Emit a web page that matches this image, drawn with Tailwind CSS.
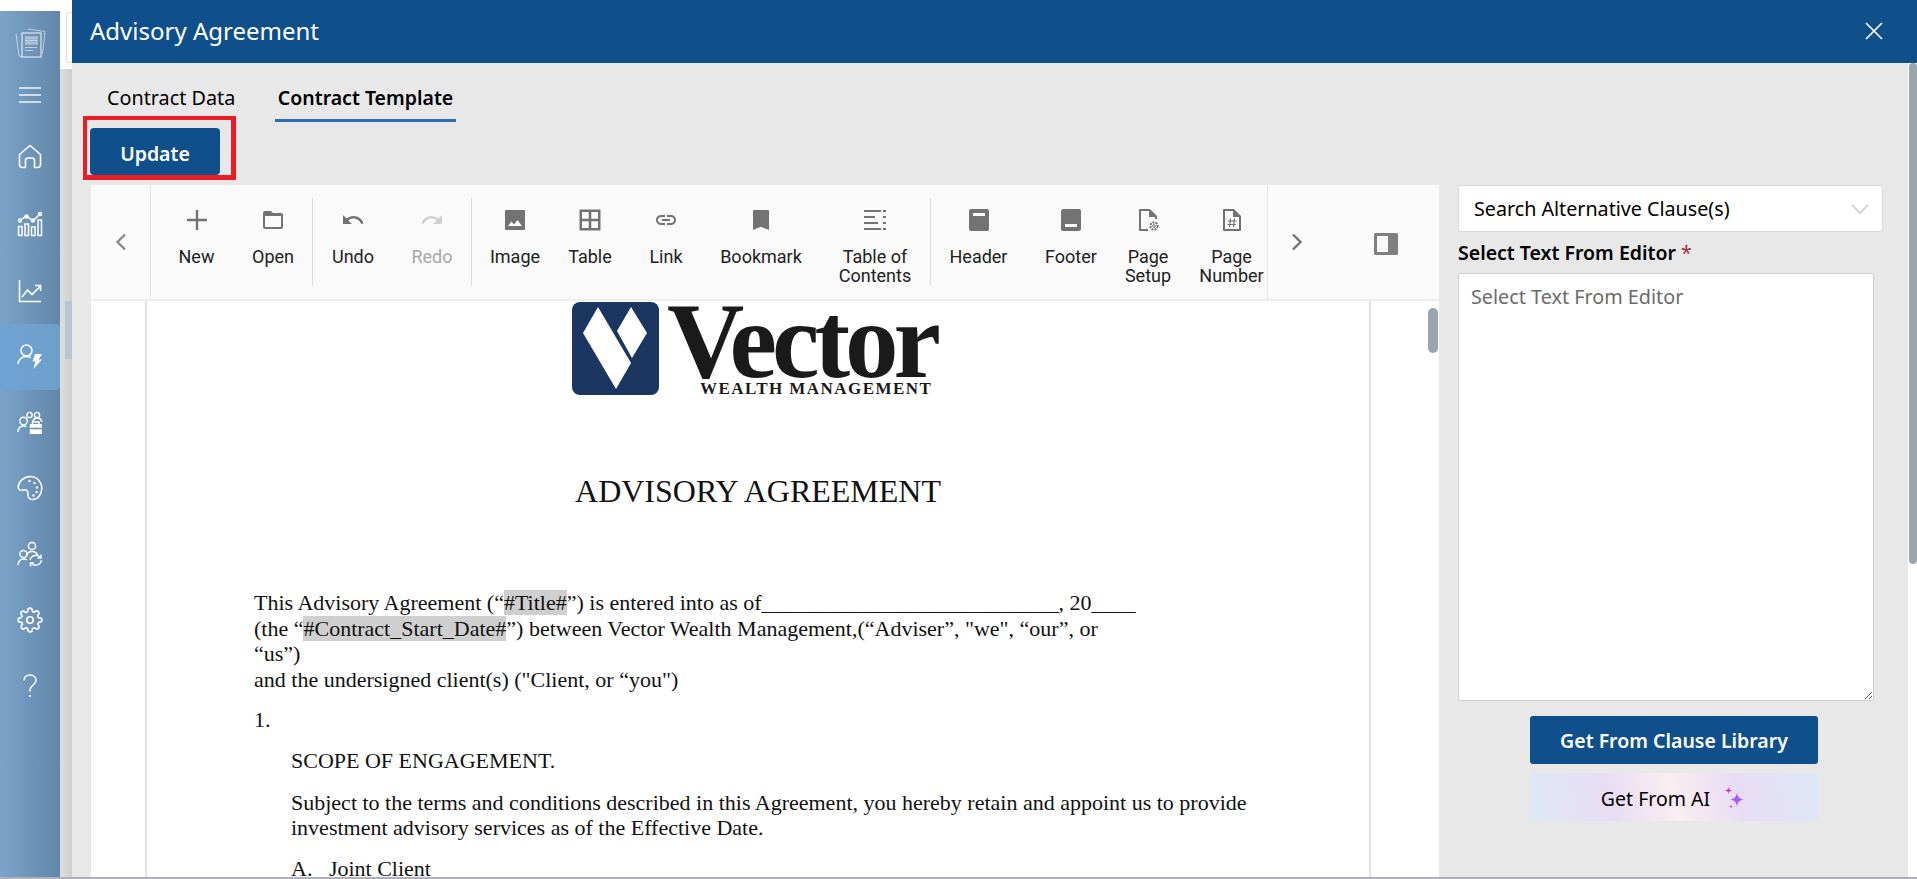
<!DOCTYPE html>
<html lang="en">
<head>
<meta charset="utf-8">
<title>Advisory Agreement</title>
<script src="https://cdn.jsdelivr.net/npm/@tailwindcss/browser@4"></script>
</head>
<body class="w-[1917px] h-[879px] overflow-hidden bg-white font-['Noto_Sans','Open_Sans',sans-serif] text-black">
<div class="flex h-[877px]">
  <!-- app sidebar -->
  <aside class="w-[60px] mt-[11px] flex flex-col items-center text-white bg-[linear-gradient(90deg,#7ba3c9,#6186a9)]">
    <div class="h-[64px] flex items-center justify-center">
      <svg width="32" height="32" viewBox="0 0 32 32" fill="none" stroke="#fff" stroke-opacity=".55" stroke-width="1"><path d="M2 6.500 L5 29 L9 30"/><path d="M14 2 L31 4.500 L28.500 27"/><rect x="8" y="6" width="19" height="24" stroke-opacity=".7" stroke-width="1.300"/><path d="M11 9h13v9H11z" fill="#fff" fill-opacity=".3" stroke="none"/><path d="M11 11h13M11 13.500h13M11 16h13" stroke-opacity=".4"/><path d="M11 20.500h12M11 23.500h8" stroke-width="1.200"/></svg>
    </div>
    <div class="h-[40px] flex items-center justify-center">
      <svg width="24" height="24" viewBox="0 0 24 24" fill="none" stroke="#fff" stroke-opacity=".9" stroke-width="1.400"><path d="M1 5h22M1 12h22M1 19h22"/></svg>
    </div>
    <div class="h-[69px] mt-[7px] flex items-center justify-center">
      <svg width="24" height="25" viewBox="0 0 24 25" fill="none" stroke="#fff" stroke-width="1.600" stroke-linejoin="round"><path d="M1.500 10.500 L12 1.500 L22.500 10.500 V20.500 a3 3 0 0 1-3 3 H16.500 V16.500 a2.500 2.500 0 0 0-2.500-2.500 h-4 a2.500 2.500 0 0 0-2.500 2.500 V23.500 H4.500 a3 3 0 0 1-3-3z"/></svg>
    </div>
    <div class="h-[66px] flex items-center justify-center">
      <svg width="26" height="26" viewBox="0 0 26 26" fill="none" stroke="#fff" stroke-width="1.500"><path d="M1.500 15.500h3.500v9H1.500zM8 13h3.500v11.500H8zM14.500 16h3.500v8.500h-3.500zM21 9h3.500v15.500H21z"/><path d="M3 9.500 9.500 5l6.500 5 7-7"/><circle cx="3" cy="9.500" r="1.500"/><circle cx="9.500" cy="5.500" r="1.500"/><circle cx="16" cy="9.500" r="1.500"/><circle cx="23" cy="3" r="1.500"/></svg>
    </div>
    <div class="h-[67px] flex items-center justify-center">
      <svg width="24" height="24" viewBox="0 0 24 24" fill="none" stroke="#fff" stroke-width="1.600"><path d="M1.500 1v21.500H23"/><path d="M4 18 9.500 11l4.500 4.500L22.500 7M17 6.500h5.500V12"/></svg>
    </div>
    <div class="h-[66px] w-full rounded-[4px] bg-[linear-gradient(90deg,#6fa3d5,#6f9ec9)] flex items-center justify-center">
      <svg width="26" height="26" viewBox="0 0 26 26" fill="none" stroke="#fff" stroke-width="1.500"><circle cx="9.500" cy="6.500" r="5.500"/><path d="M1 20C1.500 15.500 5 12.500 9.500 12.500c1.700 0 3 .3 4.200 .9"/><path d="M18 10h7l-3.500 5.500H25l-8.500 9.500 2-7.500h-3z" fill="#fff" stroke="none"/></svg>
    </div>
    <div class="h-[65px] flex items-center justify-center">
      <svg width="26" height="24" viewBox="0 0 26 24" fill="none" stroke="#fff" stroke-width="1.400"><circle cx="6.500" cy="10" r="3.800"/><path d="M.8 21c.4-3.500 2.600-6 5.700-6 1 0 2 .2 2.800.7"/><circle cx="12.500" cy="4" r="2.600"/><circle cx="20" cy="4" r="2.600"/><path d="M15.500 11c1-3 3-4 5-4s3.500 1 4.500 4"/><rect x="12.800" y="13" width="12" height="10" fill="#fff" stroke="none"/><path d="M15.500 13v-2h6.500v2" /><path d="M12.800 17.500h12M18.800 16.500v2" stroke="#6c92b5"/></svg>
    </div>
    <div class="h-[66px] flex items-center justify-center">
      <svg width="26" height="26" viewBox="0 0 26 26" fill="none" stroke="#fff" stroke-width="1.500"><path d="M13.500 1.500C7 1.500 1.500 6.500 1.200 12c-.2 3 2.300 3.700 5 3 2.700-.6 5 .2 4.700 3.500-.2 2.800 .6 6 4.600 6 5.500 0 9.300-5.500 9.300-11.500s-5-11.500-11.300-11.500z"/><circle cx="12.500" cy="6" r="1.200" fill="#fff" stroke="none"/><circle cx="17.500" cy="8" r="1.200" fill="#fff" stroke="none"/><circle cx="20" cy="12.500" r="1.200" fill="#fff" stroke="none"/><circle cx="19.500" cy="17" r="1.200" fill="#fff" stroke="none"/><circle cx="16.500" cy="20.500" r="1.200" fill="#fff" stroke="none"/></svg>
    </div>
    <div class="h-[66px] flex items-center justify-center">
      <svg width="26" height="26" viewBox="0 0 26 26" fill="none" stroke="#fff" stroke-width="1.500"><circle cx="15" cy="5" r="3.600"/><path d="M9.500 15c.6-3 2.700-4.500 5.500-4.500s5 1.500 5.500 4"/><circle cx="6.500" cy="13" r="3.600"/><path d="M1 24c.4-3.500 2.500-6 5.500-6 1.300 0 2.300 .3 3.300 1"/><path d="M13 19a6 6 0 0 1 10.500-2.500M24.500 19a6 6 0 0 1-10.500 3"/><path d="M24 13.500v3.500h-3.500M13.500 25.500v-3.500h3.500" stroke-width="1.400"/></svg>
    </div>
    <div class="h-[66px] flex items-center justify-center">
      <svg width="26" height="26" viewBox="0 0 24 24" fill="none" stroke="#fff" stroke-width="1.500" stroke-linejoin="round"><circle cx="12" cy="12" r="3"/><path d="M19.400 15a1.650 1.650 0 0 0 .33 1.820l.06.06a2 2 0 1 1-2.830 2.830l-.06-.06a1.650 1.650 0 0 0-2.800 1.170V21a2 2 0 1 1-4 0v-.09A1.650 1.650 0 0 0 7.300 19.730l-.06.06a2 2 0 1 1-2.830-2.830l.06-.06A1.650 1.650 0 0 0 3.300 14H3a2 2 0 1 1 0-4h.09A1.650 1.650 0 0 0 4.270 7.300l-.06-.06a2 2 0 1 1 2.830-2.830l.06.06A1.650 1.650 0 0 0 10 3.300V3a2 2 0 1 1 4 0v.09a1.650 1.650 0 0 0 2.800 1.170l.06-.06a2 2 0 1 1 2.830 2.830l-.06.06A1.650 1.650 0 0 0 20.700 10H21a2 2 0 1 1 0 4h-.09a1.650 1.650 0 0 0-1.510 1z"/></svg>
    </div>
    <div class="h-[66px] flex items-center justify-center">
      <svg width="16" height="24" viewBox="0 0 16 24" fill="none" stroke="#fff" stroke-width="1.500"><path d="M2 6.500C2 3.200 4.500 1 8 1s6 2.300 6 5.300c0 2.400-1.400 3.600-3 4.800-1.800 1.300-3 2.400-3 5v1.400"/><circle cx="8" cy="22" r="1.100" fill="#fff" stroke="none"/></svg>
    </div>
  </aside>

  <!-- strip of the page behind the dialog -->
  <div class="w-[12px] flex flex-col">
    <div class="h-[69px] pl-[6px] pt-[12px] bg-white"><div class="h-[51px] border border-r-0 border-[#dedede] rounded-l-[4px]"></div></div>
    <div class="flex-1 pl-[5px] bg-[linear-gradient(90deg,#dedede,#cfcfcf)]">
      <div class="h-[58px] mt-[232px] bg-[#b7c4d3]"></div>
    </div>
  </div>

  <!-- dialog -->
  <div class="flex-1 flex flex-col min-w-0 relative">
    <header class="h-[63px] shrink-0 pb-[2px] bg-[#0f4f8b] flex items-center justify-between pl-[18px] pr-[34px] text-white">
      <h1 class="text-[24px] font-normal">Advisory Agreement</h1>
      <svg width="18" height="18" viewBox="0 0 18 18" fill="none" stroke="#fff" stroke-width="1.700"><path d="M1 1l16 16M17 1L1 17"/></svg>
    </header>

    <div class="flex-1 flex min-h-0">
      <div class="flex-1 bg-[#e8e8e8] flex flex-col min-w-0 pl-[18px]">
        <nav class="h-[59px] shrink-0 flex text-[19.500px] leading-[24px]">
          <div class="w-[185px] pl-[17px] pt-[23px] text-[19.800px]">Contract Data</div>
          <div class="w-[181px] text-center pt-[23px] font-semibold border-b-[3px] border-[#2b6cb5] whitespace-nowrap">Contract Template</div>
        </nav>
        <div class="relative mt-[6px] shrink-0 h-[47px] w-[130px]">
          <button class="w-full h-full pt-[4px] bg-[#0f4f8b] text-white text-[19.500px] font-semibold rounded-[4px]">Update</button>
          <div class="absolute left-[-7px] top-[-12px] w-[153px] h-[64px] border-[4px] border-[#ed1c24] border-r-[5px] border-b-[5px]"></div>
        </div>

        <div class="flex flex-1 mt-[10px] min-h-0">
          <!-- editor -->
          <div class="w-[1348px] ml-px flex flex-col shrink-0">
            <div class="h-[116px] shrink-0 flex bg-[#fafafa] border-b-2 border-[#eeeeee] text-[18px] leading-[19.300px] font-['Roboto',sans-serif] text-[#212121]">
              <div class="w-[60px] border-r border-[#e8e8e8] flex items-center justify-center">
                <svg width="12" height="18" viewBox="0 0 12 18" fill="none" stroke="#8a8a8a" stroke-width="2.400"><path d="M10 1.500 2.500 9l7.500 7.500"/></svg>
              </div>
              <div class="w-[8px]"></div>
              <div class="w-[75px] flex flex-col items-center text-center pt-[23px]">
                <svg class="mb-[15px]" width="24" height="24" viewBox="0 0 24 24" fill="#737373"><path d="M10.800 2h2.400v8.800H22v2.400h-8.800V22h-2.400v-8.800H2v-2.400h8.800z"/></svg>New</div>
              <div class="w-[78px] flex flex-col items-center text-center pt-[23px]">
                <svg class="mb-[15px]" width="24" height="24" viewBox="0 0 24 24" fill="#737373"><path d="M10 3H4c-1.100 0-2 .9-2 2v14c0 1.100.9 2 2 2h16c1.100 0 2-.9 2-2V7c0-1.100-.9-2-2-2h-8l-2-2zm10 16H4V8h16v11z" fill-rule="evenodd"/></svg>Open</div>
              <div class="w-px h-[88px] mt-[13px] bg-[#dcdcdc]"></div>
              <div class="w-[80px] flex flex-col items-center text-center pt-[23px]">
                <svg class="mb-[15px]" width="24" height="24" viewBox="0 0 24 24" fill="#737373"><path d="M12.500 8c-2.650 0-5.050 1-6.900 2.600L2 7v9h9l-3.620-3.620c1.390-1.160 3.160-1.880 5.120-1.880 3.540 0 6.550 2.310 7.600 5.500l2.370-.78C21.080 11.030 17.150 8 12.500 8z"/></svg>Undo</div>
              <div class="w-[78px] flex flex-col items-center text-center pt-[23px] text-[#a8a8a8]">
                <svg class="mb-[15px]" width="24" height="24" viewBox="0 0 24 24" fill="#d0d0d0"><path d="M18.400 10.600C16.550 9 14.150 8 11.500 8c-4.650 0-8.580 3.030-9.960 7.220l2.360.78c1.050-3.190 4.050-5.500 7.600-5.500 1.950 0 3.730.72 5.120 1.880L13 16h9V7l-3.600 3.600z"/></svg>Redo</div>
              <div class="w-px h-[88px] mt-[13px] bg-[#dcdcdc]"></div>
              <div class="w-[86px] flex flex-col items-center text-center pt-[23px]">
                <svg class="mb-[15px]" width="24" height="24" viewBox="0 0 24 24" fill="#737373"><path d="M3 2h18c.6 0 1 .4 1 1v18c0 .6-.4 1-1 1H3c-.6 0-1-.4-1-1V3c0-.6.4-1 1-1zm2 16h14l-4.500-6-3.500 4.500-2.500-3z" fill-rule="evenodd"/></svg>Image</div>
              <div class="w-[64px] flex flex-col items-center text-center pt-[23px]">
                <svg class="mb-[15px]" width="24" height="24" viewBox="0 0 24 24" fill="#737373"><path d="M1.500 1.500h21v21h-21zM4 4v6.700h6.700V4zm9.300 0v6.700H20V4zM4 13.300V20h6.700v-6.700zm9.300 0V20H20v-6.700z" fill-rule="evenodd"/></svg>Table</div>
              <div class="w-[88px] flex flex-col items-center text-center pt-[23px]">
                <svg class="mb-[15px]" width="24" height="24" viewBox="0 0 24 24" fill="#737373"><path d="M3.900 12c0-1.710 1.390-3.100 3.100-3.100h4V7H7c-2.760 0-5 2.240-5 5s2.240 5 5 5h4v-1.900H7c-1.710 0-3.100-1.390-3.100-3.100zM8 13h8v-2H8v2zm9-6h-4v1.900h4c1.710 0 3.100 1.390 3.100 3.100s-1.390 3.100-3.100 3.100h-4V17h4c2.760 0 5-2.240 5-5s-2.240-5-5-5z"/></svg>Link</div>
              <div class="w-[102px] flex flex-col items-center text-center pt-[23px]">
                <svg class="mb-[15px]" width="24" height="24" viewBox="0 0 24 24" fill="#737373"><path d="M5 2h14c.6 0 1 .4 1 1v19l-8-3.200L4 22V3c0-.6.4-1 1-1z"/></svg>Bookmark</div>
              <div class="w-[118px] pl-[8px] flex flex-col items-center text-center pt-[23px]">
                <svg class="mb-[15px]" width="24" height="24" viewBox="0 0 24 24" fill="#737373"><path d="M1 2h17v2H1zM20 2h3v2h-3zM1 8h11v2H1zM20 8h3v2h-3zM1 14h14v2H1zM20 14h3v2h-3zM1 20h17v2H1zM20 20h3v2h-3z"/></svg>Table of<br>Contents</div>
              <div class="w-px h-[88px] mt-[13px] bg-[#dcdcdc]"></div>
              <div class="w-[95px] flex flex-col items-center text-center pt-[23px]">
                <svg class="mb-[15px]" width="24" height="24" viewBox="0 0 24 24" fill="#737373"><path d="M4 1h16c1 0 2 1 2 2v18c0 1-1 2-2 2H4c-1 0-2-1-2-2V3c0-1 1-2 2-2zm2 4v3h12V5z" fill-rule="evenodd"/></svg>Header</div>
              <div class="w-[90px] flex flex-col items-center text-center pt-[23px]">
                <svg class="mb-[15px]" width="24" height="24" viewBox="0 0 24 24" fill="#737373"><path d="M4 1h16c1 0 2 1 2 2v18c0 1-1 2-2 2H4c-1 0-2-1-2-2V3c0-1 1-2 2-2zm2 15v3h12v-3z" fill-rule="evenodd"/></svg>Footer</div>
              <div class="w-[64px] flex flex-col items-center text-center pt-[23px]">
                <svg class="mb-[15px]" width="24" height="24" viewBox="0 0 24 24" fill="#737373"><path d="M3 2c0-.6.4-1 1-1h10l7 7v3h-2V9h-6V3H5v18h7v2H4c-.6 0-1-.4-1-1z"/><circle cx="18" cy="18" r="3.600" fill="none" stroke="#737373" stroke-width="2" stroke-dasharray="2 1"/><circle cx="18" cy="18" r="1.300" fill="none" stroke="#737373"/></svg>Page<br>Setup</div>
              <div class="w-[87px] pl-[16px] flex flex-col items-center text-center pt-[23px] whitespace-nowrap">
                <svg class="mb-[15px]" width="24" height="24" viewBox="0 0 24 24" fill="#737373"><path d="M4 1h10l7 7v14c0 .6-.4 1-1 1H4c-.6 0-1-.4-1-1V2c0-.6.4-1 1-1zm1 2v18h14V9h-6V3z" fill-rule="evenodd"/><path d="M10.500 10.500 9.500 19M14.500 10.500 13.500 19M8 13h8.500M7.500 16.500H16" fill="none" stroke="#737373" stroke-width="1.200"/></svg>Page<br>Number</div>
              <div class="w-px bg-[#e8e8e8]"></div>
              <div class="w-[57px] flex items-center justify-center">
                <svg width="12" height="18" viewBox="0 0 12 18" fill="none" stroke="#737373" stroke-width="2.400"><path d="M2 1.500 9.500 9 2 16.500"/></svg>
              </div>
              <div class="flex-1 flex items-center justify-center pl-[8px] pt-[3px]">
                <svg width="24" height="22" viewBox="0 0 24 22"><rect width="24" height="22" rx="1.500" fill="#808080"/><rect x="3" y="3" width="11" height="16" fill="#fafafa"/></svg>
              </div>
            </div>

            <!-- document -->
            <div class="relative flex-1 min-h-0 bg-white overflow-hidden pl-[54px] pr-[68px]">
              <div class="h-full border-x-2 border-[#e3e3e3] pl-[107px] pr-[60px] font-['Liberation_Serif',serif] text-[22px] leading-[25.600px] text-[#111]">
                <!-- logo -->
                <div class="ml-[318px] flex h-[95px] w-[372px] text-[#1a1a1a]">
                  <svg class="shrink-0 mt-px" width="87" height="93" viewBox="0 0 87 93"><rect width="87" height="93" rx="8" fill="#1b3660"/><path d="M11 31 26 5 59 61 44 87z" fill="#fff"/><path d="M45 29 59 5 75 31 60 56z" fill="#fff"/></svg>
                  <div class="ml-[8px] flex flex-col font-bold">
                    <div class="mt-[6px] h-[69px] text-[107px] leading-[69px] tracking-[-5px] whitespace-nowrap origin-left">Vector</div>
                    <div class="ml-[33px] mt-[5px] text-[17px] leading-[16px] tracking-[1.450px] whitespace-nowrap">WEALTH MANAGEMENT</div>
                  </div>
                </div>
                <div class="mt-[75px] ml-[319px] w-[370px] flex justify-center text-[32px] leading-[40px] whitespace-nowrap">ADVISORY AGREEMENT</div>
                <div class="mt-[79px] whitespace-nowrap">
                  This Advisory Agreement (“<span class="bg-[#cfcfcf]">#Title#</span>”) is entered into as of___________________________, 20____<br>
                  (the “<span class="bg-[#cfcfcf]">#Contract_Start_Date#</span>”) between Vector Wealth Management,(“Adviser”, "we", “our”, or<br>
                  “us”)<br>
                  and the undersigned client(s) ("Client, or “you")
                </div>
                <div class="mt-[15px]">1.</div>
                <div class="mt-[15px] ml-[37px]">SCOPE OF ENGAGEMENT.</div>
                <div class="mt-[16px] ml-[37px] whitespace-nowrap">Subject to the terms and conditions described in this Agreement, you hereby retain and appoint us to provide<br>investment advisory services as of the Effective Date.</div>
                <div class="mt-[15px] ml-[37px] whitespace-nowrap">A.&nbsp;&nbsp;&nbsp;Joint Client</div>
              </div>
              <div class="absolute right-px top-[7px] w-[10px] h-[45px] rounded-[5px] bg-[#9aa5ae]"></div>
            </div>
          </div>

          <!-- clause panel -->
          <div class="ml-[19px] w-[425px] shrink-0 text-[19.500px]">
            <div class="h-[47px] pt-px bg-white border border-[#d9d9d9] rounded-[3px] flex items-center justify-between pl-[15px] pr-[13px]">
              <span class="text-[19.700px]">Search Alternative Clause(s)</span>
              <svg width="18" height="10" viewBox="0 0 18 10" fill="none" stroke="#c8c8c8" stroke-width="1.500"><path d="M1 1l8 8 8-8"/></svg>
            </div>
            <div class="mt-[8px] h-[33px] font-semibold leading-[26px]">Select Text From Editor <span class="text-[#a52a35] font-normal">*</span></div>
            <textarea class="block w-[416px] h-[428px] bg-white border border-[#cfcfcf] rounded-[2px] px-[12px] pt-[11px] pb-[9px] placeholder:text-[#6b6b6b] text-[19.800px] leading-[24px]" placeholder="Select Text From Editor"></textarea>
            <div class="mt-[15px] ml-[72px] w-[288px] flex flex-col gap-[9px]">
              <button class="h-[48px] pt-[2px] rounded-[3px] bg-[#0f4f8b] text-white font-semibold">Get From Clause Library</button>
              <button class="h-[48px] pt-[3px] rounded-[3px] flex items-center justify-center gap-[13px] bg-[linear-gradient(75deg,#dce9f6_0%,#e8dcf5_28%,#f9eef0_50%,#e8dcf5_72%,#dde7f6_100%)]">
                Get From AI
                <svg width="24" height="24" viewBox="0 0 24 24"><path d="M14 6c.8 4 2.500 5.700 7 6.500-4.500.8-6.200 2.500-7 7-.8-4.500-2.500-6.200-7-7 4.500-.8 6.200-2.500 7-6.500z" fill="#a85ff0"/><path d="M5.500 0c.4 2.200 1.200 3 3.500 3.500-2.300.5-3.100 1.300-3.500 3.500-.4-2.200-1.200-3-3.500-3.500 2.300-.5 3.100-1.300 3.500-3.500z" fill="#e829d8"/><path d="M8 17.500c.2 1.300.7 1.800 2 2-1.300.2-1.800.7-2 2-.2-1.300-.7-1.800-2-2 1.300-.2 1.800-.7 2-2z" fill="#b55bea"/></svg>
              </button>
            </div>
          </div>
        </div>
      </div>
      <!-- dialog scrollbar -->
      <div class="w-[9px] shrink-0 pl-px bg-white">
        <div class="h-[501px] bg-[#9aa5ae] rounded-t-[4px] rounded-b-[4px]"></div>
      </div>
    </div>
  </div>
</div>
<div class="h-[2px] bg-[#b0b0b8]"></div>
</body>
</html>
